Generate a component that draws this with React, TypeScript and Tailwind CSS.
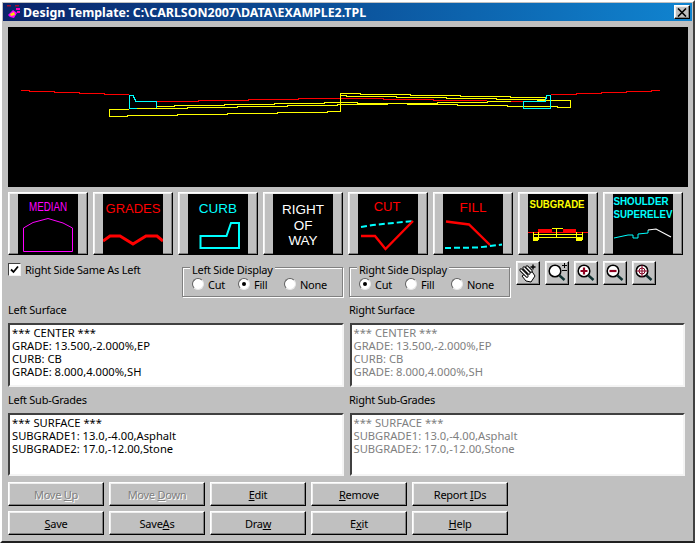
import type { ReactNode } from "react"

const raised = "border border-t-white border-l-white border-r-black border-b-black shadow-[inset_-1px_-1px_0_#808080,inset_1px_1px_0_#efefef]"
const sunken = "border-2 border-t-[#404040] border-l-[#404040] border-r-[#f4f4f4] border-b-[#f4f4f4] bg-white"
const uiFont = "font-['Liberation_Sans',sans-serif] text-[11px] leading-[13px] tracking-[-0.25px]"

// page coordinates, the viewBox below starts at the canvas corner
const profile = [
  { c: "#ff0000", d: "M21 90.5H29V91.5H54V92.5H79V93.5H104V94.5H129" },
  { c: "#ff0000", d: "M157 101.5H198V100.5H248V99.5H298V98.5H383V99.5H433V100.5H487M511 101.5H524" },
  { c: "#ff0000", d: "M551 94.5H576V93.5H601V92.5H626V91.5H651V90.5H660" },
  { c: "#ffff00", d: "M129 109.5H109.5V116.5H127V115.5H177V114.5H227V113.5H277V112.5H327V111.5H340.5V93.5H360V94.5H410V95.5H460V96.5H510V97.5H546" },
  { c: "#ffff00", d: "M340.5 95.5H346V96.5H396V97.5H446V98.5H496V99.5H546" },
  { c: "#ffff00", d: "M137 108.5H187V107.5H237V106.5H287V105.5H337V104.5H387V103.5H437V102.5H487V101.5H511M537 100.5H570.5V107.5H557V106.5H507V105.5H457V104.5H407V103.5H357V102.5H324V103.5H274V104.5H224V105.5H174V106.5H157" },
  { c: "#00ffff", d: "M137 108.5H129.5V95.5H133L136 101.5H156.5V108" },
  { c: "#00ffff", d: "M545 101.5H523.5V108.5H550.5V95.5H547L545 101.5" },
]

function IconButton({ children }: { children: ReactNode }) {
  return (
    <button className={`${raised} w-[80px] h-[63px] bg-[#c0c0c0] flex items-center justify-center`}>
      <svg width="60" height="60" viewBox="0 0 60 60" className="bg-black block">
        {children}
      </svg>
    </button>
  )
}

function Label({ x, y, fill, size = 13.5, weight = 400, width, children }: { x?: number; y: number; fill: string; size?: number; weight?: number; width?: number; children: string }) {
  return (
    <text
      x={x ?? 30}
      y={y}
      fill={fill}
      fontSize={size}
      fontWeight={weight}
      textAnchor="middle"
      textLength={width}
      lengthAdjust="spacingAndGlyphs"
      fontFamily="'Liberation Sans', sans-serif"
      letterSpacing="0"
    >
      {children}
    </text>
  )
}

function Radio({ label, checked, width }: { label: string; checked?: boolean; width: string }) {
  return (
    <div className={`flex items-center ${width}`}>
      <span className="w-[12px] h-[12px] rounded-full bg-white border border-t-[#606060] border-l-[#606060] border-r-[#e8e8e8] border-b-[#e8e8e8] flex items-center justify-center">
        {checked && <span className="w-[4px] h-[4px] rounded-full bg-black" />}
      </span>
      <span className="ml-[4px]">{label}</span>
    </div>
  )
}

function GroupBox({ title, children }: { title: string; children: ReactNode }) {
  return (
    <div className="relative w-[161px] h-[30px] mt-[6px] border border-[#808080] shadow-[1px_1px_0_white,inset_1px_1px_0_white] flex items-center pl-[9px] pt-[4px]">
      <span className="absolute left-[7px] top-[-5px] bg-[#c0c0c0] px-[2px]">{title}</span>
      {children}
    </div>
  )
}

function ListBox({ lines, dim }: { lines: string[]; dim?: boolean }) {
  return (
    <div className={`${sunken} flex-1 h-full px-[2px] pt-px text-[11.2px] leading-[13px] tracking-normal ${dim ? "text-[#808080]" : "text-black"}`}>
      {lines.map((l) => (
        <div key={l}>{l}</div>
      ))}
    </div>
  )
}

function Btn({ label, u, disabled }: { label: string; u: number; disabled?: boolean }) {
  const cls = disabled ? "text-[#808080] [text-shadow:1px_1px_0_white]" : "text-black"
  return (
    <button className={`${raised} w-[96px] h-[24px] bg-[#c0c0c0] ${cls}`}>
      {label.slice(0, u)}
      <span className="underline">{label[u]}</span>
      {label.slice(u + 1)}
    </button>
  )
}

function ToolButton({ children }: { children: ReactNode }) {
  return (
    <button className={`${raised} w-[24px] h-[24px] bg-[#c0c0c0] flex items-center justify-center`}>
      <svg width="22" height="22" viewBox="0 0 22 22" className="block">
        {children}
      </svg>
    </button>
  )
}

function Lens({ children }: { children?: ReactNode }) {
  return (
    <>
      <circle cx="9" cy="9" r="5.8" fill="white" stroke="black" strokeWidth="1.5" />
      <path d="M13.5 13.5L18.5 18" stroke="#103030" strokeWidth="2.4" />
      {children}
    </>
  )
}

const surface = ["*** CENTER ***", "GRADE: 13.500,-2.000%,EP", "CURB: CB", "GRADE: 8.000,4.000%,SH"]
const subs = ["*** SURFACE ***", "SUBGRADE1: 13.0,-4.00,Asphalt", "SUBGRADE2: 17.0,-12.00,Stone"]

export default function App() {
  return (
    <div className={`${uiFont} w-[695px] h-[543px] bg-[#c0c0c0] text-black border-2 border-t-white border-l-white border-r-[#404040] border-b-[#202020] p-px overflow-hidden`}>
      {/* title bar */}
      <div className="h-[18px] bg-gradient-to-r from-[#0a246a] to-[#1084d0] flex items-center pl-[2px] pr-[2px]">
        <svg width="16" height="16" viewBox="0 0 16 16" className="shrink-0">
          <path d="M2 1H6V2.5H2ZM10 1H14V2.5H10Z" fill="#a01030" />
          <path d="M11 4H15V6H11ZM12 7H15V9H12Z" fill="#ff00c0" />
          <path d="M3 11L8 6L12 9L9 14L5 13Z" fill="#ff00ff" />
          <path d="M5 10L9 8L10 11L6 12Z" fill="#ffe000" />
        </svg>
        <span className="ml-[2px] text-white font-bold text-[12.4px] tracking-normal">Design Template: C:\CARLSON2007\DATA\EXAMPLE2.TPL</span>
        <button className={`${raised} ml-auto w-[16px] h-[14px] bg-[#c0c0c0] flex items-center justify-center`}>
          <svg width="10" height="9" viewBox="0 0 10 9">
            <path d="M1 0.5L9 8.5M9 0.5L1 8.5" stroke="black" strokeWidth="1.6" />
          </svg>
        </button>
      </div>

      <div className="pl-[5px] pt-[6px]">
        {/* section preview */}
        <div className="w-[680px] h-[160px] bg-black">
          <svg width="680" height="160" viewBox="8 27 680 160" className="block" fill="none" shapeRendering="crispEdges">
            {profile.map((p) => (
              <path key={p.d} d={p.d} stroke={p.c} />
            ))}
          </svg>
        </div>

        {/* section type buttons */}
        <div className="flex gap-[5px] mt-[5px]">
          <IconButton>
            <Label x={30} y={17} fill="#ff00ff" size={13} width={38}>MEDIAN</Label>
            <path d="M5.5 57.5V34L15 28.5L30 24.5L45 29L54.5 34V57.5Z" fill="none" stroke="#ff00ff" />
          </IconButton>
          <IconButton>
            <Label y={19} fill="#ff0000" size={13}>GRADES</Label>
            <path d="M0 47L7 42H17L30 50L43 42H54L60 47" fill="none" stroke="#ff0000" strokeWidth="3" />
          </IconButton>
          <IconButton>
            <Label y={19} fill="#00ffff">CURB</Label>
            <path d="M12.5 42H38.5L43 29H51V54H12.5Z" fill="none" stroke="#00ffff" strokeWidth="2" />
          </IconButton>
          <IconButton>
            <Label y={20} fill="white">RIGHT</Label>
            <Label y={35.5} fill="white">OF</Label>
            <Label y={51} fill="white">WAY</Label>
          </IconButton>
          <IconButton>
            <Label x={29} y={17} fill="#ff0000" size={13}>CUT</Label>
            <path d="M3 33L15 31L55 27" fill="none" stroke="#00ffff" strokeWidth="2" strokeDasharray="6 3" />
            <path d="M3 42H17L27.5 55L55 27" fill="none" stroke="#ff0000" strokeWidth="2.4" />
          </IconButton>
          <IconButton>
            <Label x={30} y={18} fill="#ff0000">FILL</Label>
            <path d="M3 27.5L26 30.5L47 51" fill="none" stroke="#ff0000" strokeWidth="2.4" />
            <path d="M2 54L35 53.5L59 50.5" fill="none" stroke="#00ffff" strokeWidth="2" strokeDasharray="6 3" />
          </IconButton>
          <IconButton>
            <Label x={29} y={14} fill="#ffff00" size={10} weight={700} width={55}>SUBGRADE</Label>
            <g fill="none" shapeRendering="crispEdges">
              <path d="M0 38.5H60" stroke="#ff0000" />
              <path d="M10 36H24M35 36H48" stroke="#ff0000" strokeWidth="3" />
              <path d="M24 34.5H35M28.5 34V44" stroke="#ffff00" />
              <path d="M5 40.5H54M5 43.5H54M5 38V46M10 38V46M48 38V46M54 38V46" stroke="#ffff00" />
              <path d="M5 45H10M48 45H54" stroke="#ffff00" strokeWidth="3" />
            </g>
          </IconButton>
          <IconButton>
            <Label x={28} y={11} fill="#00ffff" size={10} weight={700} width={55}>SHOULDER</Label>
            <Label x={30} y={24} fill="#00ffff" size={10} weight={700} width={59}>SUPERELEV</Label>
            <path d="M1 44L15 41H20V44H25V40L35 39V36" fill="none" stroke="#00ffff" />
            <path d="M35 36L43 35L58 43" fill="none" stroke="white" strokeWidth="1.2" />
          </IconButton>
        </div>

        {/* options row */}
        <div className="flex mt-[6px] h-[36px]">
          <label className="w-[174px] flex items-start">
            <span className="mt-[2px] w-[13px] h-[13px] bg-white border border-t-[#404040] border-l-[#404040] border-r-[#f0f0f0] border-b-[#f0f0f0] flex items-center justify-center">
              <svg width="9" height="9" viewBox="0 0 9 9">
                <path d="M1 4.5L3.5 7L8 1.5" fill="none" stroke="black" strokeWidth="1.8" />
              </svg>
            </span>
            <span className="ml-[4px] mt-[2px]">Right Side Same As Left</span>
          </label>
          <GroupBox title="Left Side Display">
            <Radio label="Cut" width="w-[46px]" />
            <Radio label="Fill" checked width="w-[46px]" />
            <Radio label="None" width="w-[46px]" />
          </GroupBox>
          <div className="w-[6px]" />
          <GroupBox title="Right Side Display">
            <Radio label="Cut" checked width="w-[46px]" />
            <Radio label="Fill" width="w-[46px]" />
            <Radio label="None" width="w-[46px]" />
          </GroupBox>
          <div className="ml-[6px] flex gap-[5px] items-start">
            <ToolButton>
              <path d="M5 14L14 8L18 14L14 20L9 19Z" fill="white" stroke="black" />
              <path d="M4 8L10 14M7 6L12 11M10 5L14 9" stroke="black" strokeWidth="3.2" strokeLinecap="round" />
              <path d="M4 8L10 14M7 6L12 11M10 5L14 9" stroke="white" strokeWidth="1.4" strokeLinecap="round" />
              <path d="M13.5 5H18.5M16 2.5V7.5" stroke="black" strokeWidth="1.4" />
            </ToolButton>
            <ToolButton>
              <Lens />
              <path d="M16 3.5H21M18.5 1V6M16 8.5H21" stroke="black" />
            </ToolButton>
            <ToolButton>
              <Lens>
                <path d="M5.5 9H12.5M9 5.5V12.5" stroke="#900020" strokeWidth="2.2" />
              </Lens>
            </ToolButton>
            <ToolButton>
              <Lens>
                <path d="M5.5 9H12.5" stroke="#900020" strokeWidth="2.2" />
              </Lens>
            </ToolButton>
            <ToolButton>
              <Lens>
                <path d="M3 9H15M9 3V15" stroke="#800020" />
                <circle cx="9" cy="9" r="3" fill="none" stroke="#800020" />
              </Lens>
            </ToolButton>
          </div>
        </div>

        {/* surface lists */}
        <div className="flex gap-[6px] w-[677px] mt-[6px] h-[13px]">
          <div className="w-[335px]">Left Surface</div>
          <div>Right Surface</div>
        </div>
        <div className="flex gap-[6px] w-[677px] mt-[7px] h-[64px]">
          <ListBox lines={surface} />
          <ListBox lines={surface} dim />
        </div>
        <div className="flex gap-[6px] w-[677px] mt-[6px] h-[13px]">
          <div className="w-[335px]">Left Sub-Grades</div>
          <div>Right Sub-Grades</div>
        </div>
        <div className="flex gap-[6px] w-[677px] mt-[7px] h-[63px]">
          <ListBox lines={subs} />
          <ListBox lines={subs} dim />
        </div>

        {/* actions */}
        <div className="flex gap-[5px] mt-[6px]">
          <Btn label="Move Up" u={5} disabled />
          <Btn label="Move Down" u={5} disabled />
          <Btn label="Edit" u={0} />
          <Btn label="Remove" u={0} />
          <Btn label="Report IDs" u={7} />
        </div>
        <div className="flex gap-[5px] mt-[5px]">
          <Btn label="Save" u={0} />
          <Btn label="SaveAs" u={4} />
          <Btn label="Draw" u={3} />
          <Btn label="Exit" u={1} />
          <Btn label="Help" u={0} />
        </div>
      </div>
    </div>
  )
}
